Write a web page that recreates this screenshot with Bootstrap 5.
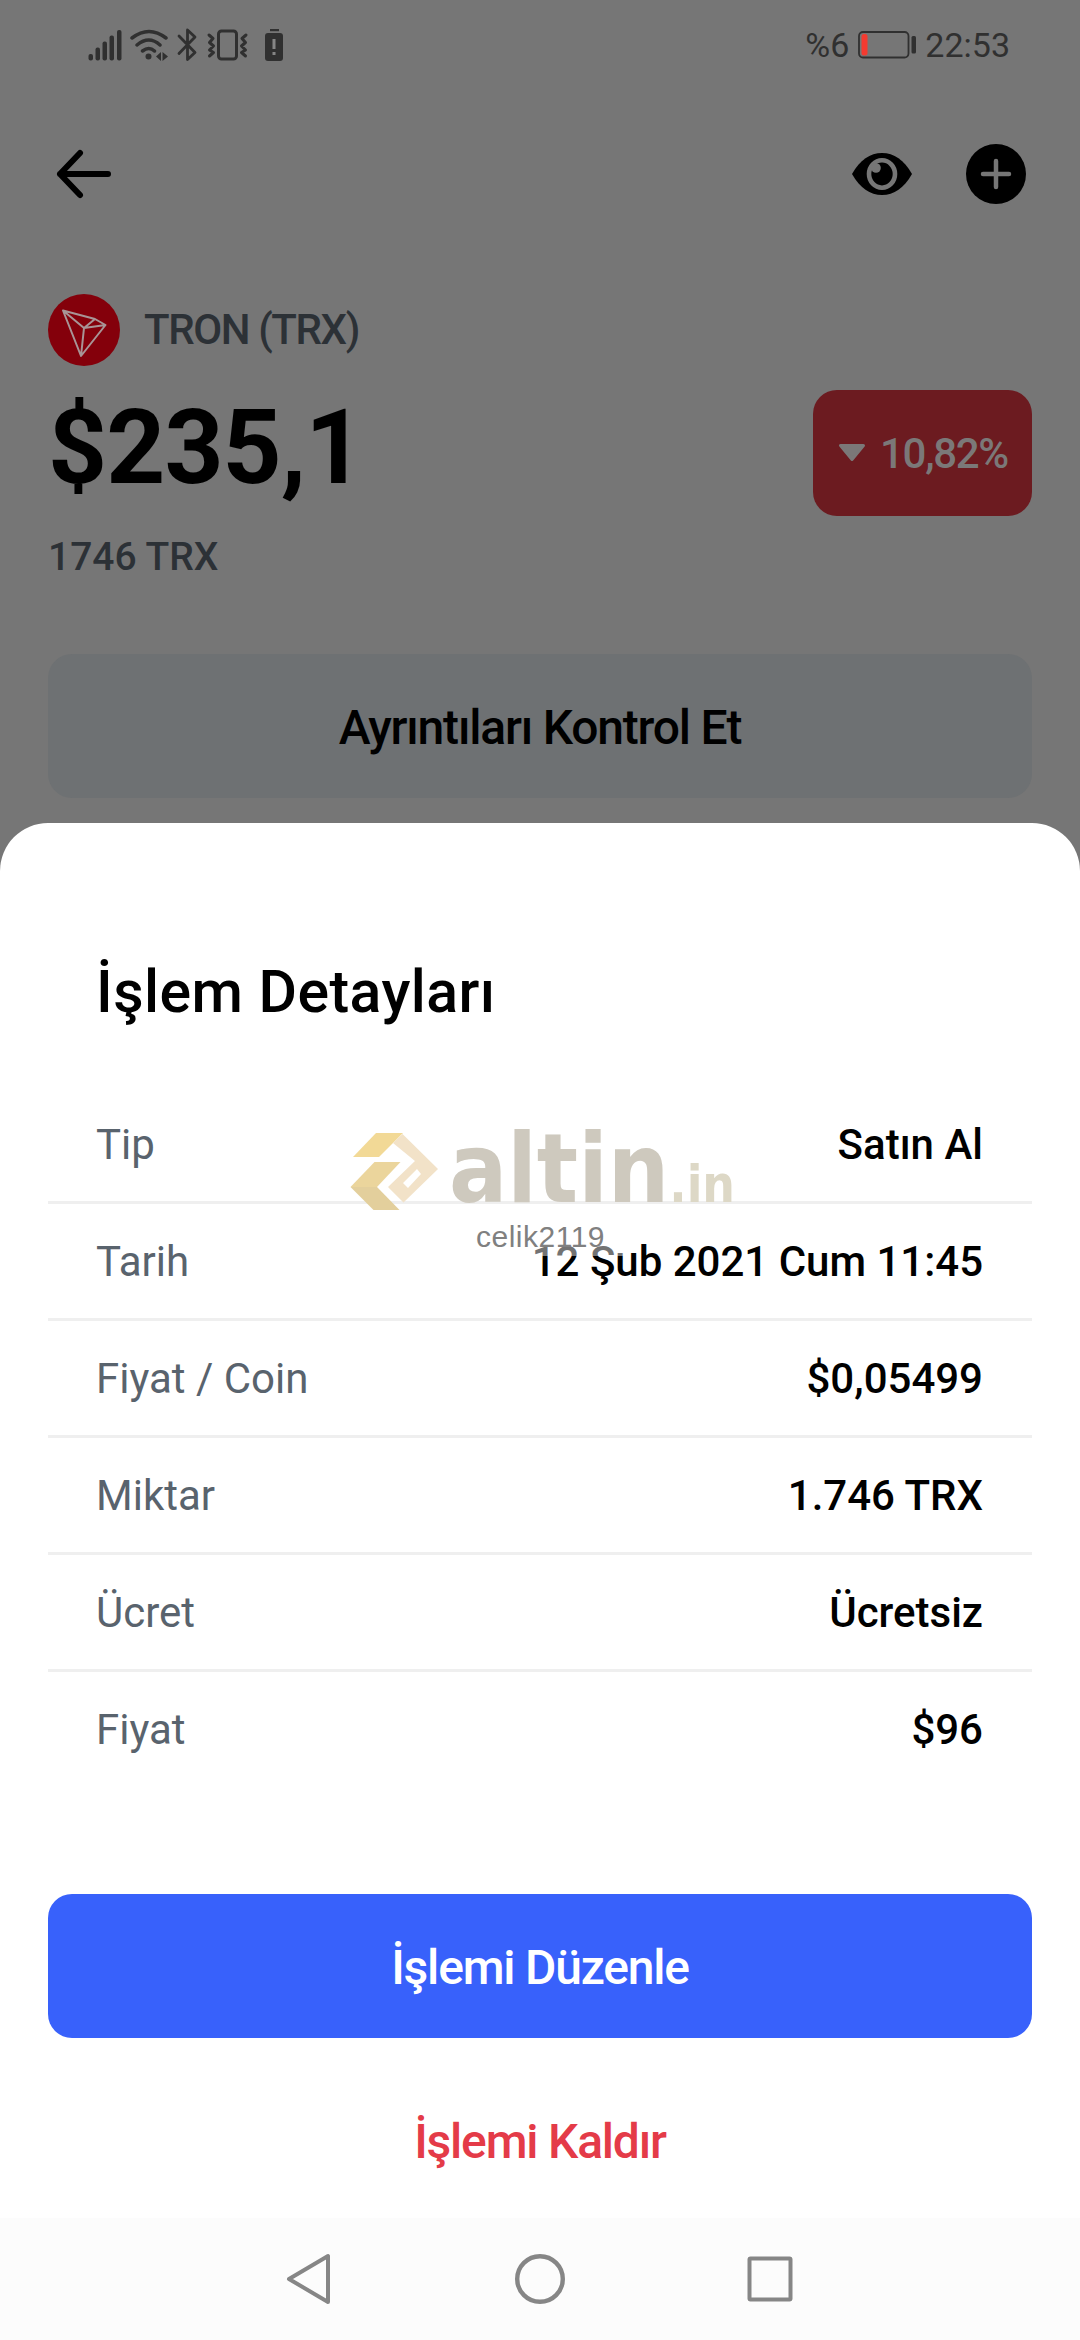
<!DOCTYPE html>
<html lang="tr">
<head>
<meta charset="utf-8">
<meta name="viewport" content="width=device-width, initial-scale=1">
<title>İşlem Detayları</title>
<link href="https://cdn.jsdelivr.net/npm/bootstrap@5.3.0/dist/css/bootstrap.min.css" rel="stylesheet">
<style>
body{font-family:Roboto,"Noto Sans",sans-serif;background:#767676;color:#000;margin:0}
svg{display:block;flex:none}
.screen{width:1080px;height:2340px;overflow:hidden;background:#767676}
.statusbar{height:90px;padding:0 70px 0 86px;font-size:34px;color:#303030;line-height:40px}
.toolbar-top{height:168px;padding:0 54px 0 54px}
.toolbar-actions{gap:54px}
.overview{padding:36px 48px 0}
.coin-name{font-size:42px;line-height:72px;font-weight:500;color:#2c3136;letter-spacing:-1.4px}
.balance{font-size:103px;line-height:116px;font-weight:700;letter-spacing:-.9px}
.holding{font-size:39px;line-height:50px;font-weight:500;color:#2c3136;margin-top:16px}
.change-pill{width:219px;height:126px;border-radius:24px;background:#6c1b20;color:#7b7878;font-size:42px;font-weight:500;letter-spacing:-1.3px;padding:0 24px 0 25px}
.big-btn{height:144px;border-radius:24px;border:0;font-size:48px;font-weight:500;letter-spacing:-1.2px;padding:4px 0 0;line-height:60px}
.check-btn{background:#6e7173;color:#000;margin-top:72px}
.sheet{margin-top:25px;height:1395px;background:#fff;border-radius:48px 48px 0 0;padding:129px 48px 0}
.sheet-title{font-size:59px;line-height:80px;font-weight:500;margin:0 0 55px;padding-left:48px;letter-spacing:.45px}
.detail-row{height:117px;padding:0 49px 0 48px;border-bottom:3px solid #efefef;font-size:42px;color:#59636d}
.detail-row:last-child{border-bottom-color:transparent}
.detail-row .val{color:#000;font-weight:500}
.edit-btn{background:#3861fb;color:#fff;margin-top:105px}
.remove-btn{background:none;color:#e43b48;margin-top:30px}
.navbar-sys{height:122px;background:#fcfcfc;padding:0 286px 0 285px}
.wm{left:350px;top:1121px;width:400px}
.wm-mark{margin-top:1px}
.wm-word{font-family:"DejaVu Sans Condensed","DejaVu Sans",sans-serif;font-stretch:condensed;font-weight:700;font-size:96px;line-height:96px;color:#cec9be;margin-left:9px}
.wm-tld{font-size:51px;color:#ddd8c6}
.wm-user{left:456px;top:1218px;width:168px;height:38px;background:rgba(255,255,255,.45);font-family:"Liberation Sans",Arial,sans-serif;font-size:30px;line-height:38px;color:#808080;padding-left:20px;letter-spacing:.5px}
</style>
<script src="https://cdn.jsdelivr.net/npm/bootstrap@5.3.0/dist/js/bootstrap.bundle.min.js"></script>
</head>
<body>
<main class="screen position-relative d-flex flex-column">
  <header class="statusbar d-flex justify-content-between align-items-center">
    <svg width="200" height="36" viewBox="86 27 200 36" fill="#303030">
      <rect x="88.500" y="54" width="4.500" height="6.500" rx="2"/><rect x="95.500" y="47.500" width="4.500" height="13" rx="2"/><rect x="102.500" y="41.500" width="4.500" height="19" rx="2"/><rect x="109.500" y="35.500" width="4.500" height="25" rx="2"/><rect x="117" y="30" width="4.500" height="30.500" rx="2"/>
      <g fill="none" stroke="#303030" stroke-width="3.500" stroke-linecap="round"><path d="M132 38Q149 25 166 38M137 45Q149 35 160 45M142.500 51Q149 46 154.500 51"/></g>
      <circle cx="148.500" cy="56.500" r="3"/><path d="M161 52v9l-5-4.500zM162.500 52l5.500 4.500-5.500 4.500z"/>
      <path d="M178 36l16 16.500-7.500 7V30l7.500 7-16 16.500" transform="translate(1 0)" fill="none" stroke="#303030" stroke-width="2.800" stroke-linejoin="round" stroke-linecap="round"/>
      <rect x="218.500" y="31" width="18" height="28" rx="3" fill="none" stroke="#303030" stroke-width="3"/>
      <path d="M209 35l4 3.500-3.500 4 4 3.500-4 4 4 2.500-4 3.500M246 35l-4 3.500 3.500 4-4 3.500 4 4-4 2.500 4 3.500" fill="none" stroke="#303030" stroke-width="3" stroke-linecap="round" stroke-linejoin="round"/>
      <rect x="270" y="29" width="9" height="2.200"/><rect x="265" y="33" width="18" height="28" rx="3"/><path d="M272.500 39h3v10h-3zM272.500 52h3v3h-3z" fill="#858585"/>
    </svg>
    <div class="d-flex align-items-center">
      <span>%6</span>
      <svg class="ms-2 me-2" width="60" height="30" viewBox="857 31 60 30"><rect x="859" y="33" width="49.500" height="25.500" rx="4" fill="none" stroke="#303030" stroke-width="1.800"/><rect x="861.500" y="35" width="6" height="21.500" rx="2.500" fill="#f43a30"/><rect x="911.500" y="37" width="4.500" height="17.500" rx="1.500" fill="#303030"/></svg>
      <span>22:53</span>
    </div>
  </header>

  <nav class="toolbar-top d-flex align-items-center justify-content-between">
    <svg width="60" height="56" viewBox="0 0 60 56" fill="none" stroke="#000" stroke-width="6" stroke-linecap="round" stroke-linejoin="round"><path d="M54 28H6M26 7 6 28l20 21"/></svg>
    <div class="toolbar-actions d-flex align-items-center">
      <svg width="60" height="60" viewBox="0 0 60 60"><path d="M0 30C8 16 18 9 30 9s22 7 30 21C52 44 42 51 30 51S8 44 0 30z"/><ellipse cx="30" cy="30" rx="13" ry="13.700" fill="none" stroke="#767676" stroke-width="4.600"/><circle cx="24" cy="24" r="4.800" fill="#767676"/></svg>
      <svg width="60" height="60" viewBox="0 0 60 60"><circle cx="30" cy="30" r="30"/><path d="M30 17v26M17 30h26" stroke="#767676" stroke-width="4.500" stroke-linecap="round"/></svg>
    </div>
  </nav>

  <section class="overview">
    <div class="d-flex align-items-center">
      <svg width="72" height="72" viewBox="0 0 72 72"><circle cx="36" cy="36" r="36" fill="#84000b"/><path d="M15 16.500l32 8.500 10.500 6L33 62zM15 16.500L36 34l-3 28M36 34l11-9M36 34l21.500-3" fill="none" stroke="#a89496" stroke-width="2" stroke-linejoin="round"/></svg>
      <span class="coin-name ms-4">TRON (TRX)</span>
    </div>
    <div class="d-flex justify-content-between align-items-start mt-4">
      <span class="balance">$235,1</span>
      <span class="change-pill d-flex align-items-center justify-content-between"><svg width="28" height="18" viewBox="0 0 28 18"><path d="M2.500 1.500h23L14 15.500z" fill="#7b7878" stroke="#7b7878" stroke-width="3" stroke-linejoin="round"/></svg>10,82%</span>
    </div>
    <div class="holding">1746 TRX</div>
    <button class="btn big-btn check-btn w-100 d-block">Ayrıntıları Kontrol Et</button>
  </section>

  <section class="sheet">
    <h1 class="sheet-title">İşlem Detayları</h1>
    <div>
      <div class="detail-row d-flex align-items-center justify-content-between"><span>Tip</span><span class="val">Satın Al</span></div>
      <div class="detail-row d-flex align-items-center justify-content-between"><span>Tarih</span><span class="val">12 Şub 2021 Cum 11:45</span></div>
      <div class="detail-row d-flex align-items-center justify-content-between"><span>Fiyat / Coin</span><span class="val">$0,05499</span></div>
      <div class="detail-row d-flex align-items-center justify-content-between"><span>Miktar</span><span class="val">1.746 TRX</span></div>
      <div class="detail-row d-flex align-items-center justify-content-between"><span>Ücret</span><span class="val">Ücretsiz</span></div>
      <div class="detail-row d-flex align-items-center justify-content-between"><span>Fiyat</span><span class="val">$96</span></div>
    </div>
    <button class="btn big-btn edit-btn w-100 d-block">İşlemi Düzenle</button>
    <button class="btn big-btn remove-btn w-100 d-block">İşlemi Kaldır</button>
  </section>

  <footer class="navbar-sys d-flex align-items-center justify-content-between">
    <svg width="48" height="54" viewBox="0 0 48 54" fill="none" stroke="#868686" stroke-width="4" stroke-linejoin="round"><path d="M43 4v46L4 27z"/></svg>
    <svg width="54" height="54" viewBox="0 0 54 54" fill="none" stroke="#868686" stroke-width="4.400"><circle cx="27" cy="27" r="22.800"/></svg>
    <svg width="48" height="48" viewBox="0 0 48 48" fill="none" stroke="#868686" stroke-width="4" stroke-linejoin="round"><rect x="3.500" y="3.500" width="41" height="41" rx="1"/></svg>
  </footer>

  <!-- Site watermark lying over the sheet -->
  <div class="wm position-absolute d-flex align-items-start">
    <svg class="wm-mark" width="90" height="90" viewBox="350 1122 90 90">
      <path d="M353 1157l23-24h27l-24 24z" fill="#f2d996"/>
      <path fill-rule="evenodd" d="M402.500 1134L438 1169l-34.500 33.500L388 1187l27-26-22-18zM417 1169l-14 14 5 5 13-14z" fill="#f2e2c8"/>
      <path d="M350.500 1187l24-25h26l-23.500 25z" fill="#ebd59c"/>
      <path d="M350.500 1187h26.500l22.500 23h-26z" fill="#e3cf9c"/>
    </svg>
    <span class="wm-word text-nowrap">altin<span class="wm-tld">.in</span></span>
  </div>
  <div class="wm-user position-absolute">celik2119</div>
</main>
</body>
</html>
